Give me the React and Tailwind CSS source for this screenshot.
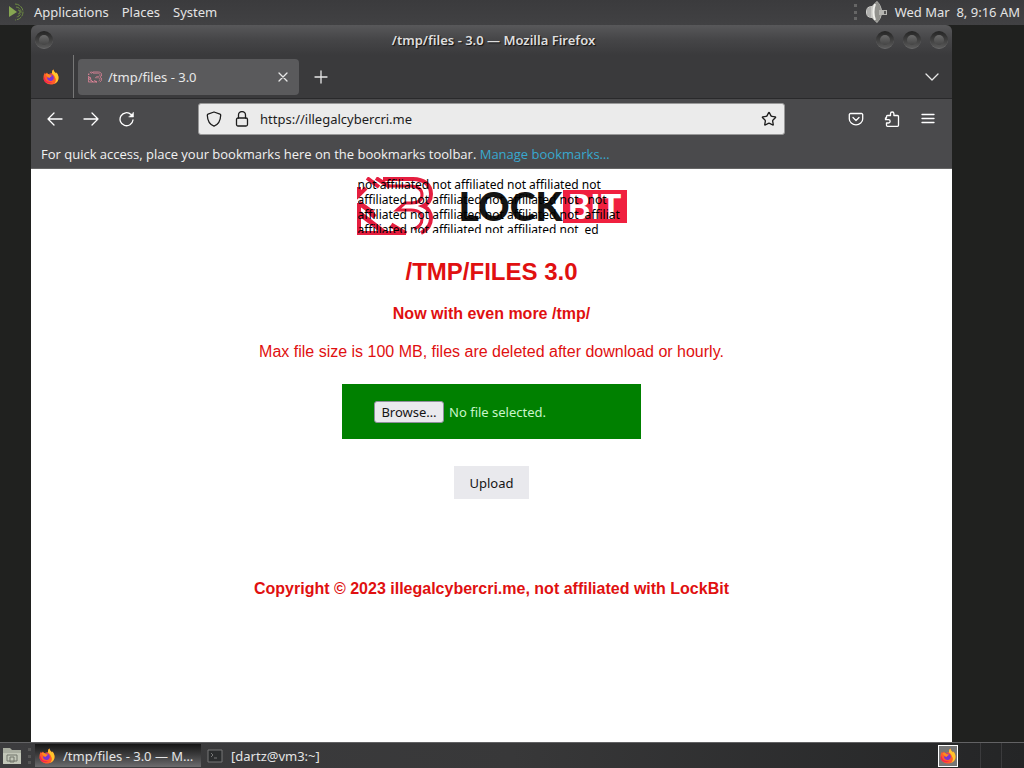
import React, { useState } from "react";
import { Star } from "lucide-react";

const systemMenus = ["Applications", "Places", "System"];

function FirefoxIcon({ className }) {
  return (
    <svg viewBox="0 0 32 32" className={className} aria-hidden="true">
      <path d="M16 31C7 31 1 25 1 17c0-4 1-7 3-10l1 3 3-3c1 2 2 3 4 3 2-1 5-2 6-1 0-3 0-6 3-8 0 4 3 5 5 8l1-2c3 4 4 7 4 11 0 8-7 13-15 13z" fill="#ff5a2c" />
      <path d="M18 9c0-3 0-6 3-8 0 4 3 5 5 8l1-2c3 4 4 7 4 11 0 6-4 10-9 12 4-4 5-9 2-13-1-4-3-6-6-8z" fill="#ffc52c" />
      <path d="M3 15c1 8 7 13 16 11-5 5-16 3-18-6z" fill="#f5274d" />
      <path d="M10 12c4-2 9-1 11 3 2 5-2 9-6 9s-7-3-7-7l6-1c1-2-2-3-4-4z" fill="#7a35d2" />
      <path d="M5 11c2-2 5-2 8 1l5 1c-1 3-4 2-5 5-3-1-5-3-8-7z" fill="#ff8a1c" />
    </svg>
  );
}

function MateIcon() {
  return (
    <svg viewBox="0 0 20 20" className="h-5 w-5" fill="none" aria-hidden="true">
      <path d="M1 4l8 6-8 5z" fill="#87a752" />
      <path d="M7 2a8 8 0 1 1 0 16" stroke="#6d8b43" strokeDasharray="5 1" />
      <path d="M8 5a5 5 0 1 1 0 10" stroke="#6d8b43" strokeDasharray="4 1" />
      <path d="M10 8a2 2 0 1 1 0 4" stroke="#6d8b43" />
    </svg>
  );
}

function SpeakerIcon() {
  return (
    <svg viewBox="0 0 24 24" className="h-6 w-6" aria-hidden="true">
      <path d="M2 8q2-2 5-2v12q-3 0-5-2-2-4 0-8z" fill="#d8d8d4" />
      <path d="M3 8v8M5 7v10" stroke="#888" />
      <path d="M6 7l6-6q5 5 5 11t-5 11l-6-6z" fill="#c9c9c5" />
      <ellipse cx="12" cy="12" rx="4" ry="10" fill="#92928e" />
      <path d="M10 4q-3 8 0 16" fill="none" stroke="#f0f0ec" strokeWidth="2" />
      <path d="M14 10h8v5h-8z" fill="#b5b5b1" />
      <path d="M19 11h2v3h-2z" fill="#555" />
    </svg>
  );
}

function WindowButton({ label }) {
  return (
    <button aria-label={label} className="flex h-[18px] w-[18px] items-center justify-center rounded-full border-b border-[#686868] bg-linear-to-b from-[#242424] to-[#5a5a5a]">
      <span className="h-2.5 w-2.5 rounded-full bg-linear-to-b from-[#6a6a6a] to-[#454545]" />
    </button>
  );
}

// 16px toolbar glyph
function Glyph({ children, className = "h-4 w-4" }) {
  return (
    <svg viewBox="0 0 16 16" className={className} fill="none" stroke="currentColor" strokeWidth="1.3" strokeLinecap="round" strokeLinejoin="round" aria-hidden="true">
      {children}
    </svg>
  );
}

function LockBitMark({ className }) {
  return (
    <svg viewBox="0 0 76 58" className={className} fill="none" stroke="#e51e3f" aria-hidden="true">
      <path d="M26 2h30c11 0 18 6 18 15 0 6-3 10-8 12 5 2 8 7 8 12 0 7-4 12-10 15" strokeWidth="4" />
      <path d="M33 9h20c8 0 12 3 12 9s-4 8-11 8h-6l-8 7h14c8 0 11 3 11 9 0 5-3 8-8 10" strokeWidth="3" />
      <path d="M10 1l12 9M19 1l14 9M2 10v8l7-7M2 26v30h47" strokeWidth="4" />
      <path d="M2 26l14 10M2 36l26 20M11 33l7 7M34 48l15 9" strokeWidth="5" />
    </svg>
  );
}

function PageLogo() {
  return (
    <div className="relative flex h-[58px] w-[270px] items-center" aria-label="LockBit">
      <LockBitMark className="h-[58px] w-[76px]" />
      <span className="ml-[26px] w-[104px] font-[Lato] text-[39px] leading-9 font-black text-[#151515]">LOCK</span>
      <span className="flex h-[33px] w-[64px] items-center justify-center bg-[#f0203f] font-[Lato] text-[34px] leading-8 font-black text-white">BIT</span>
      <p className="absolute top-0 left-px h-[56px] w-[250px] overflow-hidden text-[12px] leading-[15px] text-black">
        not affiliated not affiliated not affiliated not<br />
        affiliated not affiliated not affiliated not<br />
        affiliated not affiliated not affiliated not<br />
        affiliated not affiliated not affiliated not
      </p>
      <p className="absolute top-[15px] left-[228px] text-[12px] leading-[15px] text-black">
        &nbsp;not<br />affiliat<br />ed
      </p>
    </div>
  );
}

function SystemPanel() {
  return (
    <header className="flex h-[25px] items-center bg-linear-to-b from-[#3b3b3d] to-[#414143] pr-1 pb-px pl-2 text-[#e4e4e4]">
      <MateIcon />
      <nav className="ml-1.5 flex gap-[13px]">
        {systemMenus.map((menu) => (
          <button key={menu}>{menu}</button>
        ))}
      </nav>
      <div className="ml-auto flex items-center">
        <span className="mr-2 h-4 border-l-3 border-dotted border-[#666]" />
        <SpeakerIcon />
        <time className="ml-1.5">Wed Mar&nbsp; 8, 9:16 AM</time>
      </div>
    </header>
  );
}

function BrowserChrome() {
  const [url, setUrl] = useState("https://illegalcybercri.me");

  return (
    <>
      <div className="flex h-[30px] items-center bg-linear-to-b from-[#58585a] via-[#454547] to-[#3a3a3c] px-1">
        <WindowButton label="Window menu" />
        <h1 className="flex-1 pl-[58px] text-center font-semibold text-[#dedede] [text-shadow:1px_1px_1px_#111]">/tmp/files - 3.0 — Mozilla Firefox</h1>
        <div className="flex gap-[9px]">
          <WindowButton label="Minimize" />
          <WindowButton label="Maximize" />
          <WindowButton label="Close window" />
        </div>
      </div>

      {/* Tabs */}
      <div className="flex h-11 items-center border-b border-[#29292b] bg-[#3a3a3c] text-[#e8e8e8]">
        <FirefoxIcon className="ml-3 h-4 w-4" />
        <div className="ml-3.5 h-full border-l border-[#777]" />
        <div className="ml-1 flex h-9 w-[221px] items-center rounded bg-[#5a5a5c] px-2.5 pt-px">
          <LockBitMark className="mr-1.5 h-3 w-3.5 [stroke:#f18aa1]" />
          <span className="flex-1">/tmp/files - 3.0</span>
          <button aria-label="Close tab" className="mr-[-2px]">
            <Glyph><path d="M4 4l8 8M12 4l-8 8" /></Glyph>
          </button>
        </div>
        <button aria-label="New tab" className="ml-3.5">
          <Glyph><path d="M8 2v12M2 8h12" /></Glyph>
        </button>
        <button aria-label="List all tabs" className="mr-3 ml-auto">
          <Glyph><path d="M2 5l6 6 6-6" /></Glyph>
        </button>
      </div>

      {/* Navigation */}
      <div className="flex h-10 items-center bg-[#4a4a4c] px-4 text-white">
        <div className="flex gap-5">
          <button aria-label="Back">
            <Glyph><path d="M15 8H1M7 2L1 8l6 6" /></Glyph>
          </button>
          <button aria-label="Forward">
            <Glyph><path d="M1 8h14M9 2l6 6-6 6" /></Glyph>
          </button>
          <button aria-label="Reload">
            <Glyph>
              <path d="M14 9a6.500 6.500 0 1 1-2-5.500l1 1" />
              <path d="M14.500 1.500V6H10z" fill="currentColor" strokeWidth="0.5" />
            </Glyph>
          </button>
        </div>
        <div className="mx-[63px] flex h-8 flex-1 items-center rounded-[3px] border border-[#999] bg-[#ebebeb] px-[7px] text-[#1d1d1d]">
          <Glyph>
            <path d="M8 1l6 2.200c.5.2.8.6.7 1.100C14.500 9.500 12.500 13.500 8 15.200 3.500 13.500 1.500 9.500 1.300 4.300c0-.5.2-.9.7-1.100z" />
          </Glyph>
          <span className="w-3" />
          <Glyph>
            <rect x="2.500" y="7" width="11" height="8" rx="1.500" />
            <path d="M4.500 7V4a3.500 3.500 0 0 1 7 0v3" />
          </Glyph>
          <input aria-label="Address" value={url} onChange={(e) => setUrl(e.target.value)} className="ml-2.5 min-w-0 flex-1 outline-none" />
          <button aria-label="Bookmark this page"><Star className="h-4 w-4" strokeWidth={2} /></button>
        </div>
        <div className="flex gap-5">
          <button aria-label="Save to Pocket">
            <Glyph>
              <path d="M2.500 2.500h11a1.200 1.200 0 0 1 1.200 1.200V8a6.700 5.800 0 0 1-13.400 0V3.700a1.200 1.200 0 0 1 1.200-1.200z" />
              <path d="M5 6.500l3 3 3-3" />
            </Glyph>
          </button>
          <button aria-label="Extensions">
            <Glyph>
              <path d="M2.500 7V5.500a1 1 0 0 1 1-1h3V2.700a1.700 1.700 0 0 1 3.400 0v1.800h3.600a1 1 0 0 1 1 1v8.800a1 1 0 0 1-1 1h-10a1 1 0 0 1-1-1V12h2a1.600 1.600 0 0 0 0-3.300H1.500V7z" />
            </Glyph>
          </button>
          <button aria-label="Application menu">
            <Glyph><path d="M2 3.500h12M2 7.500h12M2 11.500h12" /></Glyph>
          </button>
        </div>
      </div>

      <p className="h-[30px] border-b border-[#666] bg-[#4a4a4c] px-2.5 pt-[5px] font-['Open_Sans',sans-serif] text-[#f2f2f2]">
        For quick access, place your bookmarks here on the bookmarks toolbar.{" "}
        <a href="#bookmarks" className="text-[#38a9cf]">Manage bookmarks…</a>
      </p>
    </>
  );
}

function UploadPage() {
  const [fileName, setFileName] = useState("");

  return (
    <main className="flex flex-1 flex-col items-center bg-white pt-2 font-['Liberation_Sans',sans-serif] text-base leading-6 text-[#e01010]">
      <div className="font-['Noto_Sans',sans-serif]"><PageLogo /></div>
      <h2 className="mt-[21px] text-2xl leading-8 font-bold">/TMP/FILES 3.0</h2>
      <h3 className="mt-3.5 font-bold">Now with even more /tmp/</h3>
      <p className="mt-3.5">Max file size is 100 MB, files are deleted after download or hourly.</p>
      <form className="flex flex-col items-center font-['Noto_Sans',sans-serif] text-[13px] leading-5" onSubmit={(e) => e.preventDefault()}>
        <label className="mt-5 flex h-[55px] w-[299px] items-center bg-[#008000] px-8 text-[#c9f5c9]">
          <input type="file" className="sr-only" onChange={(e) => setFileName(e.target.files[0]?.name || "")} />
          <span className="mr-[5px] w-[70px] rounded-[3px] border border-[#8f8f9d] bg-[#e9e9ed] text-center text-[#151515]">Browse…</span>
          {fileName || "No file selected."}
        </label>
        <button type="submit" className="mt-[27px] h-[33px] w-[75px] bg-[#e9e9ed] text-[#151515]">Upload</button>
      </form>
      <footer className="mt-[78px] font-bold">Copyright © 2023 illegalcybercri.me, not affiliated with LockBit</footer>
    </main>
  );
}

function Taskbar() {
  return (
    <footer className="flex h-[26px] items-center border-t border-[#626264] bg-linear-to-r from-[#3c3c3e] via-[#383839] to-[#242526] text-[#e4e4e4]">
      <button aria-label="Show desktop" className="ml-0.5">
        <svg viewBox="0 0 20 18" className="h-[18px] w-5" aria-hidden="true">
          <path d="M1 1h7l2 2h9v14H1z" fill="#a9ada0" />
          <path d="M1 6h18v11H1z" fill="#c2c6b8" />
          <path d="M5 8h10v6H5zM8 10h4v5H8z" fill="none" stroke="#73776d" />
        </svg>
      </button>
      <span className="ml-1.5 h-4 border-l-3 border-dotted border-[#555]" />
      <button className="ml-1 flex h-[23px] w-[166px] items-center bg-linear-to-b from-[#161616] to-[#6c6c6e] pl-1">
        <FirefoxIcon className="mr-2 h-4 w-4" />/tmp/files - 3.0 — M…
      </button>
      <button className="ml-1.5 flex items-center">
        <svg viewBox="0 0 16 14" className="mr-2 h-3.5 w-4" fill="#2b2d2e" stroke="#777" aria-hidden="true">
          <path d="M1 1h14v12H1zM4 4l2 2-2 2M7 9h3" />
        </svg>
        [dartz@vm3:~]
      </button>
      <div className="ml-auto flex h-full items-center">
        <button aria-label="Workspace 1" className="flex h-[22px] w-5 items-center justify-center border border-white bg-[#777]"><FirefoxIcon className="h-4 w-4" /></button>
        <button aria-label="Workspace 2" className="h-full w-[23px] border-r border-[#3b3b3d]" />
        <button aria-label="Workspace 3" className="h-full w-[21px] border-r border-[#3b3b3d]" />
        <button aria-label="Workspace 4" className="h-full w-[22px]" />
      </div>
    </footer>
  );
}

export default function App() {
  return (
    <div className="flex min-h-screen flex-col bg-[#20211f] font-['Noto_Sans',sans-serif] text-[13px] leading-5">
      <SystemPanel />
      <section className="mr-[72px] ml-[31px] flex flex-1 flex-col overflow-hidden rounded-t-md">
        <BrowserChrome />
        <UploadPage />
      </section>
      <Taskbar />
    </div>
  );
}
